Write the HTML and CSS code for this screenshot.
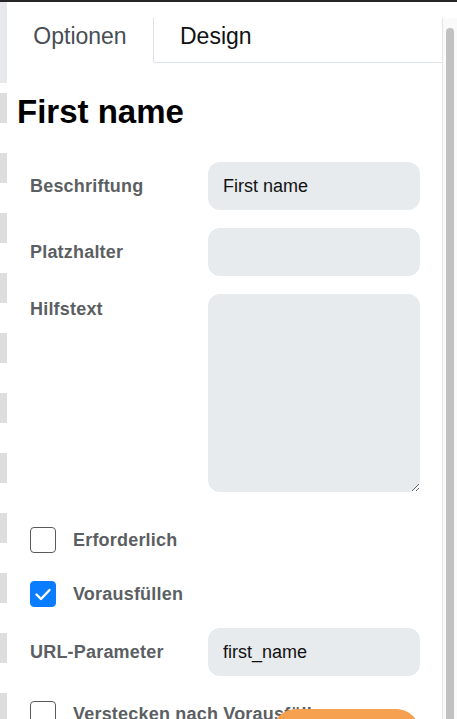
FILE: index.html
```html
<!DOCTYPE html>
<html lang="de">
<head>
    <meta charset="UTF-8">
    <meta name="viewport" content="width=device-width, initial-scale=1.0">
    <title>Feld bearbeiten</title>
    <link rel="stylesheet" href="styles.css">
</head>
<body>

<div class="page">
    <div class="canvas-edge">
        <div class="edge-head"></div>
        <div class="edge-dashes"></div>
    </div>

    <aside class="sidebar">
        <div class="sidebar-body">
            <nav class="tabs">
                <button class="tab tab-active">Optionen</button>
                <button class="tab">Design</button>
                <span class="tab-rest"></span>
            </nav>

            <div class="settings">
                <h2 class="settings-title">First name</h2>

                <div class="field">
                    <label class="field-label" for="f-label">Beschriftung</label>
                    <input class="field-input" id="f-label" type="text" value="First name">
                </div>

                <div class="field">
                    <label class="field-label" for="f-placeholder">Platzhalter</label>
                    <input class="field-input" id="f-placeholder" type="text">
                </div>

                <div class="field field-area">
                    <label class="field-label" for="f-help">Hilfstext</label>
                    <textarea class="field-input field-textarea" id="f-help"></textarea>
                </div>

                <div class="check check-first">
                    <span class="check-box"></span>
                    <span>Erforderlich</span>
                </div>

                <div class="check check-second">
                    <span class="check-box is-on">
                        <svg viewBox="0 0 26 26" width="26" height="26"><path d="M6.5 13.5l4.5 4.5 8.5-9" fill="none" stroke="#fff" stroke-width="2.4" stroke-linecap="round" stroke-linejoin="round"/></svg>
                    </span>
                    <span>Vorausfüllen</span>
                </div>

                <div class="field field-url">
                    <label class="field-label" for="f-param">URL-Parameter</label>
                    <input class="field-input" id="f-param" type="text" value="first_name">
                </div>

                <div class="check">
                    <span class="check-box"></span>
                    <span>Verstecken nach Vorausfüllen</span>
                </div>
            </div>
        </div>

        <div class="scrollbar">
            <div class="scrollbar-thumb"></div>
        </div>
    </aside>

    <button class="save-button">Speichern</button>
</div>

</body>
</html>
```

FILE: styles.css
```css
body {
    margin: 0;
    height: 719px;
    box-sizing: border-box;
    border-top: 2px solid #262626;
    overflow: hidden;
    background: #fff;
    font-family: 'Liberation Sans', Arial, sans-serif;
    color: #111;
}

.page {
    display: flex;
    height: 100%;
}

/* strip of the form canvas peeking out on the left */
.canvas-edge {
    width: 7px;
    display: flex;
    flex-direction: column;
}

.edge-head {
    height: 81px;
    background: #e6e8eb;
}

.edge-dashes {
    flex: 1;
    margin-top: 10px;
    background: repeating-linear-gradient(to bottom, #dddddd 0 30px, transparent 30px 60px);
}

.sidebar {
    flex: 1;
    display: flex;
    margin-top: 16px;
    min-width: 0;
    overflow: hidden;
}

.sidebar-body {
    flex: 1;
    min-width: 0;
}

.scrollbar {
    width: 14px;
    flex-shrink: 0;
    border-left: 1px solid #e4e4e4;
    background: #fafafa;
}

.scrollbar-thumb {
    height: 740px;
    margin: 10px 3px 0;
    border-radius: 4px;
    background: #c1c1c1;
}

.tabs {
    display: flex;
    height: 45px;
}

.tab {
    box-sizing: border-box;
    height: 45px;
    padding: 0 26px 8px;
    border: none;
    border-bottom: 1px solid #dde3e8;
    background: #fff;
    font-family: inherit;
    font-size: 23px;
    line-height: 26px;
    color: #111;
    text-align: center;
    vertical-align: top;
}

.tab-active {
    width: 147px;
    padding: 0 0 8px;
    border-bottom-color: transparent;
    border-right: 1px solid #dde3e8;
    color: #474d54;
}

.tab-rest {
    flex: 1;
    border-bottom: 1px solid #dde3e8;
}

.settings {
    padding: 0 22px 120px 10px;
}

.settings-title {
    margin: 30px 0 31px;
    font-size: 33px;
    line-height: 38px;
    font-weight: bold;
    color: #000;
}

.field {
    display: flex;
    align-items: center;
    margin: 0 0 18px 13px;
}

.field-label {
    width: 178px;
    flex-shrink: 0;
    font-size: 18px;
    line-height: 22px;
    font-weight: bold;
    color: #5b5f63;
    letter-spacing: 0.2px;
}

.field-input {
    box-sizing: border-box;
    width: 212px;
    height: 48px;
    padding: 0 15px;
    border: none;
    border-radius: 12px;
    background: #e8ebee;
    font-family: inherit;
    font-size: 18px;
    color: #111;
    outline: none;
}

.field-area {
    align-items: flex-start;
    margin-bottom: 35px;
}

.field-area .field-label {
    padding-top: 4px;
}

.field-textarea {
    height: 198px;
    padding: 12px 15px;
    resize: both;
}

.field-url {
    margin-bottom: 25px;
}

.check {
    display: flex;
    align-items: center;
    gap: 17px;
    height: 26px;
    margin-left: 13px;
    font-size: 18px;
    line-height: 22px;
    font-weight: bold;
    color: #5b5f63;
    letter-spacing: 0.2px;
    white-space: nowrap;
}

.check-first {
    margin-bottom: 28px;
}

.check-second {
    margin-bottom: 21px;
}

.check-box {
    box-sizing: border-box;
    width: 26px;
    height: 26px;
    flex-shrink: 0;
    border: 1px solid #5a5a5a;
    border-radius: 4px;
    background: #fff;
}

.check-box svg {
    display: block;
    margin: -1px;
}

.check-box.is-on {
    border-color: #0a7cff;
    background: #0a7cff;
}

.save-button {
    position: fixed;
    right: 37px;
    bottom: -38px;
    width: 148px;
    height: 48px;
    border: none;
    border-radius: 24px;
    background: #f6a14f;
    color: #fff;
    font-family: inherit;
    font-size: 18px;
    font-weight: bold;
}
```
